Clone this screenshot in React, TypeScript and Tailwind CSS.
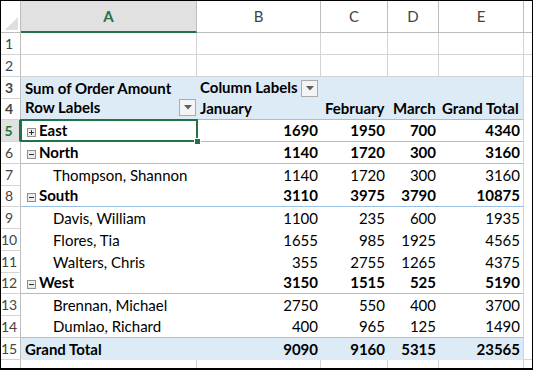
import React from 'react';

const gridCols = 'grid grid-cols-[20px_176px_124px_67px_51px_85px_8px]';
const cellText = 'flex items-end pb-[3px] leading-none whitespace-nowrap';
const grid = 'border-[#d4d4d4]';

type PivotRow = {
  n: number;
  label: string;
  vals: number[];
  kind: 'region' | 'child' | 'total';
  toggle?: '+' | '-';
  line?: boolean;
  selected?: boolean;
};

const pivotRows: PivotRow[] = [
  { n: 5, label: 'East', vals: [1690, 1950, 700, 4340], kind: 'region', toggle: '+', line: true, selected: true },
  { n: 6, label: 'North', vals: [1140, 1720, 300, 3160], kind: 'region', toggle: '-', line: true },
  { n: 7, label: 'Thompson, Shannon', vals: [1140, 1720, 300, 3160], kind: 'child' },
  { n: 8, label: 'South', vals: [3110, 3975, 3790, 10875], kind: 'region', toggle: '-', line: true },
  { n: 9, label: 'Davis, William', vals: [1100, 235, 600, 1935], kind: 'child' },
  { n: 10, label: 'Flores, Tia', vals: [1655, 985, 1925, 4565], kind: 'child' },
  { n: 11, label: 'Walters, Chris', vals: [355, 2755, 1265, 4375], kind: 'child' },
  { n: 12, label: 'West', vals: [3150, 1515, 525, 5190], kind: 'region', toggle: '-', line: true },
  { n: 13, label: 'Brennan, Michael', vals: [2750, 550, 400, 3700], kind: 'child' },
  { n: 14, label: 'Dumlao, Richard', vals: [400, 965, 125, 1490], kind: 'child', line: true },
  { n: 15, label: 'Grand Total', vals: [9090, 9160, 5315, 23565], kind: 'total' },
];

// row heights for rows 1..15 (22,22,22,21 repeating)
const heightFor = (n: number) => (n % 4 === 0 && n <= 12 ? 'h-[21px]' : 'h-[22px]');

function RowHead({ n, selected }: { n: number; selected?: boolean }) {
  return (
    <div
      className={`${cellText} justify-center pr-[3px] text-[14px] border-b ${grid} ${
        selected
          ? 'bg-[#e1e1e1] text-[#217346] font-bold border-r-2 border-r-[#217346]'
          : 'bg-white text-[#444] border-r border-r-[#bdbdbd]'
      }`}
    >
      {n}
    </div>
  );
}

function Dropdown() {
  return (
    <div className="flex h-[17px] w-[17px] items-center justify-center border border-[#ababab] bg-[#f4f4f4]">
      <svg width="8" height="5" viewBox="0 0 8 5">
        <path d="M0 0h8L4 4.5z" fill="#5f5f5f" />
      </svg>
    </div>
  );
}

function Toggle({ kind }: { kind: '+' | '-' }) {
  return (
    <span className="mr-[3px] mb-[1px] flex h-[9px] w-[9px] items-center justify-center border border-[#8f8f8f] bg-[#ececec]">
      <svg width="7" height="7" viewBox="0 0 7 7">
        <path d="M1 3.5h5" stroke="#333" strokeWidth="1" />
        {kind === '+' && <path d="M3.5 1v5" stroke="#333" strokeWidth="1" />}
      </svg>
    </span>
  );
}

function BlankRow({ n }: { n: number }) {
  return (
    <div className={`${gridCols} h-[22px]`}>
      <RowHead n={n} />
      <div className={`border-r border-b ${grid}`} />
      <div className={`border-r border-b ${grid}`} />
      <div className={`border-r border-b ${grid}`} />
      <div className={`border-r border-b ${grid}`} />
      <div className={`border-r border-b ${grid}`} />
      <div className={`border-b ${grid}`} />
    </div>
  );
}

function DataRow({ row }: { row: PivotRow }) {
  const bold = row.kind !== 'child';
  const bg = row.kind === 'total' ? 'bg-[#ddebf7]' : 'bg-white';
  const line = row.line ? 'border-b border-b-[#9bc2e6]' : '';
  return (
    <div className={`${gridCols} ${heightFor(row.n)} text-[15px] text-black`}>
      <RowHead n={row.n} selected={row.selected} />
      <div
        className={`relative ${cellText} ${bg} ${line} ${bold ? 'font-bold' : ''} ${
          row.kind === 'child' ? 'pl-[32px]' : row.toggle ? 'pl-[6px]' : 'pl-[4px]'
        }`}
      >
        {row.toggle && <Toggle kind={row.toggle} />}
        {row.label}
        {row.selected && (
          <>
            <div className="absolute -top-[1px] -left-[1px] -right-[1px] -bottom-[1px] border-2 border-[#217346]" />
            <div className="absolute -right-[4px] -bottom-[4px] z-10 h-[7px] w-[7px] border border-white bg-[#217346]" />
          </>
        )}
      </div>
      {row.vals.map((v, i) => (
        <div
          key={i}
          className={`${cellText} justify-end pr-[3px] ${bg} ${line} ${bold ? 'font-bold' : ''} ${
            i === 3 ? `border-r ${grid}` : ''
          }`}
        >
          {v}
        </div>
      ))}
      <div className={row.n === 15 ? `border-b ${grid}` : ''} />
    </div>
  );
}

export default function App() {
  return (
    <div className="h-[370px] w-[533px] overflow-hidden border-t border-l border-r border-b-2 border-black bg-white font-[Lato,'Liberation_Sans',sans-serif]">
      {/* column headers */}
      <div className={`${gridCols} h-[32px] text-[15px]`}>
        <div className="relative border-r border-b border-[#bdbdbd] bg-white">
          <svg className="absolute right-[2px] bottom-[2px]" width="13" height="13" viewBox="0 0 13 13">
            <path d="M13 0V13H0z" fill="#dfdfdf" />
          </svg>
        </div>
        <div className="flex items-center justify-center border-r border-r-[#bdbdbd] border-b-2 border-b-[#217346] bg-[#e1e1e1] font-bold text-[#217346]">
          A
        </div>
        {['B', 'C', 'D', 'E'].map((c) => (
          <div key={c} className="flex items-center justify-center border-r border-b border-[#bdbdbd] text-[#444]">
            {c}
          </div>
        ))}
        <div className="border-b border-[#bdbdbd]" />
      </div>

      <BlankRow n={1} />
      <BlankRow n={2} />

      {/* row 3 */}
      <div className={`${gridCols} h-[22px] text-[15px] font-bold text-black`}>
        <RowHead n={3} />
        <div className={`${cellText} bg-[#ddebf7] pl-[4px]`}>Sum of Order Amount</div>
        <div className={`${cellText} items-center gap-[4px] bg-[#ddebf7] pl-[3px]`}>
          <span className="pb-[1px]">Column Labels</span>
          <div className="mb-[-1px]">
            <Dropdown />
          </div>
        </div>
        <div className="bg-[#ddebf7]" />
        <div className="bg-[#ddebf7]" />
        <div className={`bg-[#ddebf7] border-r ${grid}`} />
        <div />
      </div>

      {/* row 4 */}
      <div className={`${gridCols} h-[21px] text-[15px] font-bold text-black`}>
        <RowHead n={4} />
        <div className={`${cellText} justify-between border-b border-b-[#9bc2e6] bg-[#ddebf7] pl-[4px] pr-[1px] pb-[2px]`}>
          <span className="pb-[1px]">Row Labels</span>
          <Dropdown />
        </div>
        <div className={`${cellText} border-b border-b-[#9bc2e6] bg-[#ddebf7] pl-[3px]`}>January</div>
        <div className={`${cellText} border-b border-b-[#9bc2e6] bg-[#ddebf7] pl-[4px]`}>February</div>
        <div className={`${cellText} border-b border-b-[#9bc2e6] bg-[#ddebf7] pl-[5px]`}>March</div>
        <div className={`${cellText} border-b border-b-[#9bc2e6] border-r border-r-[#d4d4d4] bg-[#ddebf7] pl-[3px]`}>
          Grand Total
        </div>
        <div />
      </div>

      {pivotRows.map((r) => (
        <DataRow key={r.n} row={r} />
      ))}

      {/* row 16, cut off */}
      <div className={`${gridCols} h-[8px]`}>
        <div className={`border-r border-[#bdbdbd]`} />
        <div className={`border-r ${grid}`} />
        <div className={`border-r ${grid}`} />
        <div className={`border-r ${grid}`} />
        <div className={`border-r ${grid}`} />
        <div className={`border-r ${grid}`} />
        <div />
      </div>
    </div>
  );
}
